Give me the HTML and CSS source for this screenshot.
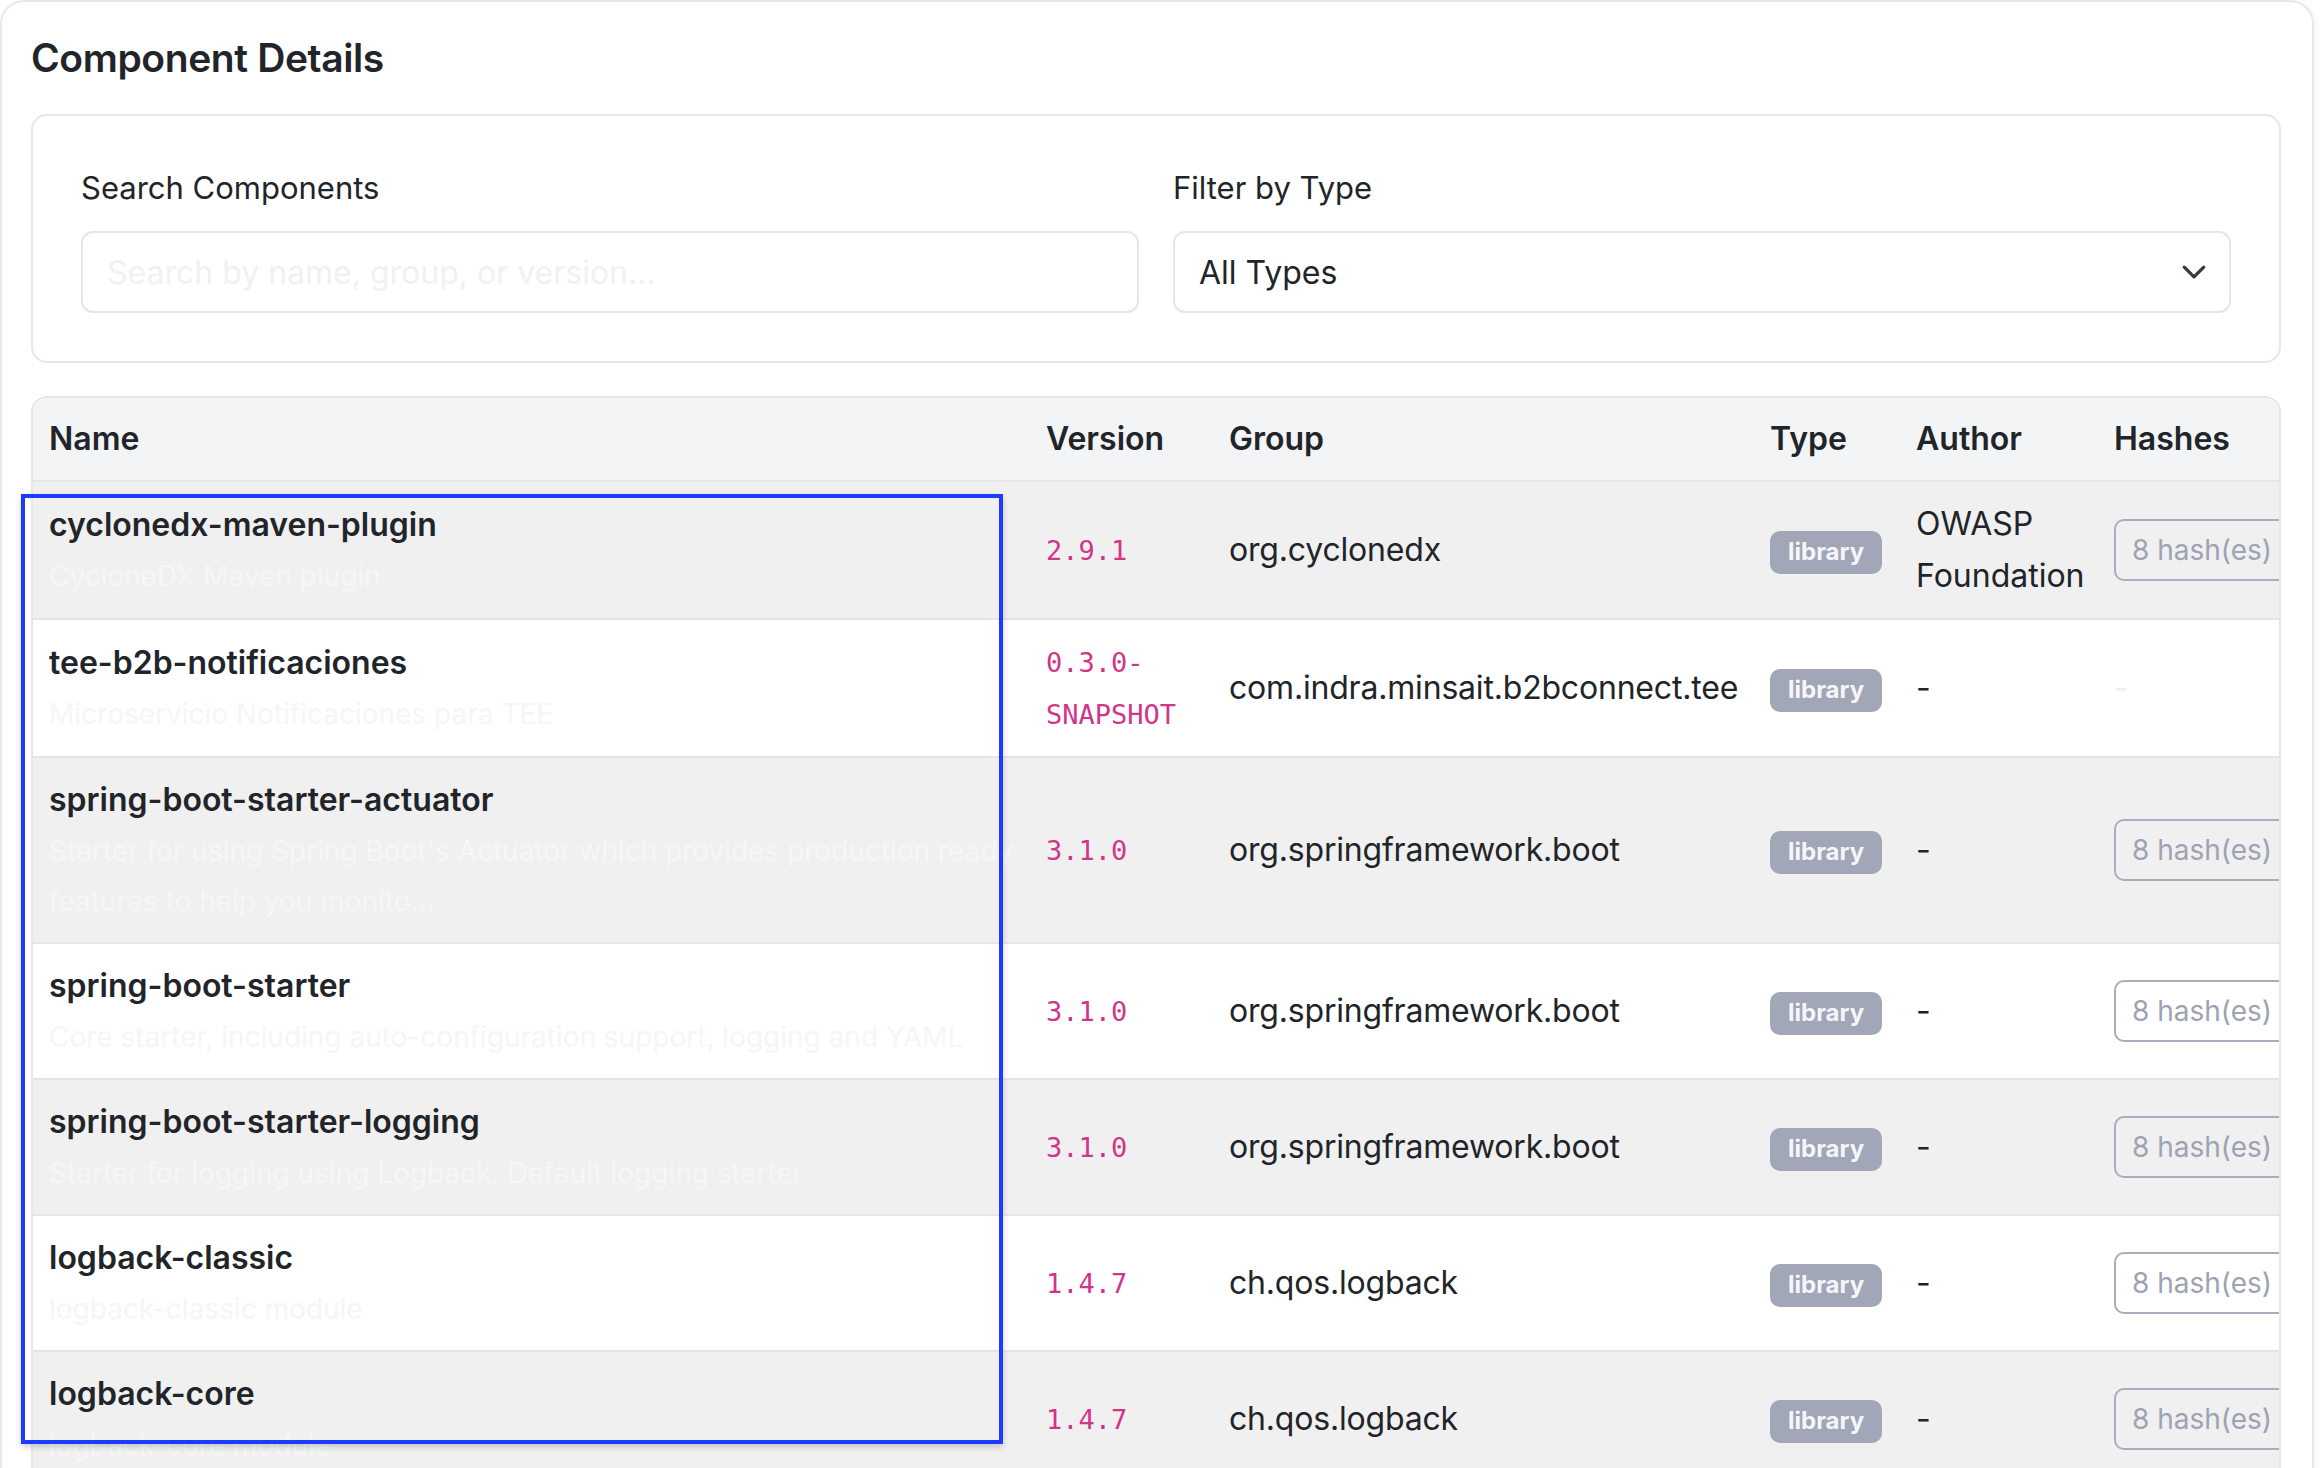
FILE: index.html
```html
<!DOCTYPE html>
<html lang="en">
<head>
<meta charset="utf-8">
<title>Component Details</title>
<link rel="stylesheet" href="styles.css">
</head>
<body>
<section class="card">
  <h2 class="title">Component Details</h2>
  <div class="filters">
    <div class="field">
      <label class="label" for="search">Search Components</label>
      <input class="input" id="search" type="text" placeholder="Search by name, group, or version...">
    </div>
    <div class="field">
      <label class="label">Filter by Type</label>
      <div class="select">
        <span>All Types</span>
        <svg class="chev" viewBox="0 0 16 16" width="26" height="26"><path d="M2 5l6 6 6-6" fill="none" stroke="#343a40" stroke-width="2" stroke-linecap="round" stroke-linejoin="round"/></svg>
      </div>
    </div>
  </div>
  <div class="table-wrap">
    <table class="tbl">
      <colgroup>
        <col class="c-name"><col class="c-ver"><col class="c-group"><col class="c-type"><col class="c-author"><col class="c-hash">
      </colgroup>
      <thead>
        <tr><th>Name</th><th>Version</th><th>Group</th><th>Type</th><th>Author</th><th>Hashes</th></tr>
      </thead>
      <tbody>
        <tr>
          <td><span class="name">cyclonedx-maven-plugin</span><span class="desc">CycloneDX Maven plugin</span></td>
          <td class="ver"><code>2.9.1</code></td>
          <td class="grp">org.cyclonedx</td>
          <td><span class="badge">library</span></td>
          <td>OWASP Foundation</td>
          <td><span class="hash">8 hash(es)</span></td>
        </tr>
        <tr>
          <td><span class="name">tee-b2b-notificaciones</span><span class="desc">Microservicio Notificaciones para TEE</span></td>
          <td class="ver"><code>0.3.0-SNAPSHOT</code></td>
          <td class="grp">com.indra.minsait.b2bconnect.tee</td>
          <td><span class="badge">library</span></td>
          <td>-</td>
          <td><span class="none">-</span></td>
        </tr>
        <tr>
          <td><span class="name">spring-boot-starter-actuator</span><span class="desc">Starter for using Spring Boot's Actuator which provides production ready features to help you monito...</span></td>
          <td class="ver"><code>3.1.0</code></td>
          <td class="grp">org.springframework.boot</td>
          <td><span class="badge">library</span></td>
          <td>-</td>
          <td><span class="hash">8 hash(es)</span></td>
        </tr>
        <tr>
          <td><span class="name">spring-boot-starter</span><span class="desc">Core starter, including auto-configuration support, logging and YAML</span></td>
          <td class="ver"><code>3.1.0</code></td>
          <td class="grp">org.springframework.boot</td>
          <td><span class="badge">library</span></td>
          <td>-</td>
          <td><span class="hash">8 hash(es)</span></td>
        </tr>
        <tr>
          <td><span class="name">spring-boot-starter-logging</span><span class="desc">Starter for logging using Logback. Default logging starter</span></td>
          <td class="ver"><code>3.1.0</code></td>
          <td class="grp">org.springframework.boot</td>
          <td><span class="badge">library</span></td>
          <td>-</td>
          <td><span class="hash">8 hash(es)</span></td>
        </tr>
        <tr>
          <td><span class="name">logback-classic</span><span class="desc">logback-classic module</span></td>
          <td class="ver"><code>1.4.7</code></td>
          <td class="grp">ch.qos.logback</td>
          <td><span class="badge">library</span></td>
          <td>-</td>
          <td><span class="hash">8 hash(es)</span></td>
        </tr>
        <tr>
          <td><span class="name">logback-core</span><span class="desc">logback-core module</span></td>
          <td class="ver"><code>1.4.7</code></td>
          <td class="grp">ch.qos.logback</td>
          <td><span class="badge">library</span></td>
          <td>-</td>
          <td><span class="hash">8 hash(es)</span></td>
        </tr>
      </tbody>
    </table>
  </div>
</section>
<div class="highlight"></div>
</body>
</html>
```

FILE: styles.css
```css
html, body {
  margin: 0;
  padding: 0;
  background: #ffffff;
}
body {
  font-family: Inter, "Noto Sans", "Liberation Sans", sans-serif;
  color: #212529;
  overflow: hidden;
}
.card {
  width: 2314px;
  box-sizing: border-box;
  border: 2px solid #e6e8eb;
  border-radius: 24px;
  padding: 32px 31px 40px 29px;
  background: #ffffff;
  box-shadow: 2px 0 6px rgba(0, 0, 0, 0.04);
}
.title {
  margin: 0 0 32px;
  font-size: 39px;
  line-height: 48px;
  font-weight: 600;
  letter-spacing: -0.01em;
  color: #212529;
}
.filters {
  border: 2px solid #e5e7eb;
  border-radius: 16px;
  padding: 48px;
  display: grid;
  grid-template-columns: 1fr 1fr;
  column-gap: 34px;
}
.field {
  display: flex;
  flex-direction: column;
}
.label {
  display: block;
  font-size: 31px;
  line-height: 48px;
  margin-bottom: 19px;
  color: #212529;
}
.input, .select {
  box-sizing: border-box;
  height: 82px;
  width: 100%;
  border: 2px solid #e3e6ea;
  border-radius: 12px;
  padding: 0 24px;
  font-family: inherit;
  font-size: 32px;
  color: #212529;
  background: #ffffff;
  outline: none;
}
.input::placeholder {
  color: #f0f1f4;
}
.select {
  display: flex;
  align-items: center;
  justify-content: space-between;
  padding-right: 22px;
}
.chev {
  display: block;
}
.table-wrap {
  margin-top: 33px;
  border: 2px solid #e5e7eb;
  border-bottom: none;
  border-radius: 16px 16px 0 0;
  overflow: hidden;
}
.tbl {
  table-layout: fixed;
  width: 2277px;
  border-collapse: collapse;
}
.c-name { width: 997px; }
.c-ver { width: 183px; }
.c-group { width: 541px; }
.c-type { width: 146px; }
.c-author { width: 198px; }
.c-hash { width: 212px; }
.tbl th {
  background: #f3f4f6;
  text-align: left;
  font-weight: 600;
  font-size: 32px;
  line-height: 52px;
  padding: 15px 16px;
  border-bottom: 2px solid #e3e5e8;
  color: #212529;
}
.tbl td {
  padding: 16px;
  vertical-align: middle;
  border-bottom: 2px solid #e3e5e8;
  font-size: 32px;
  line-height: 52px;
  color: #212529;
}
.tbl td.grp {
  letter-spacing: -0.006em;
}
.tbl tbody tr:nth-child(odd) td {
  background: #f0f0f0;
}
.name {
  display: block;
  font-weight: 600;
}
.desc {
  display: block;
  font-size: 28px;
  line-height: 50px;
  color: #f5f6f8;
}
.tbl td.ver {
  line-height: 50px;
}
.ver code {
  font-family: "DejaVu Sans Mono", "Liberation Mono", monospace;
  font-size: 27px;
  color: #d1358a;
}
.badge {
  display: inline-block;
  vertical-align: middle;
  background: #a2a7b8;
  color: #f5f6f9;
  font-size: 24px;
  font-weight: 700;
  line-height: 24px;
  padding: 9px 18px 10px;
  border-radius: 10px;
}
.hash {
  display: inline-block;
  vertical-align: middle;
  border: 2px solid #a9aebe;
  border-radius: 10px;
  color: #9ea3b4;
  font-size: 28px;
  line-height: 42px;
  padding: 8px 16px;
  white-space: nowrap;
}
.none {
  color: #eeeff1;
}
.highlight {
  position: absolute;
  left: 21px;
  top: 494px;
  width: 982px;
  height: 950px;
  box-sizing: border-box;
  border: 4px solid #1c3bff;
  box-shadow: 0 3px 6px rgba(0, 0, 0, 0.18);
  pointer-events: none;
}
```
